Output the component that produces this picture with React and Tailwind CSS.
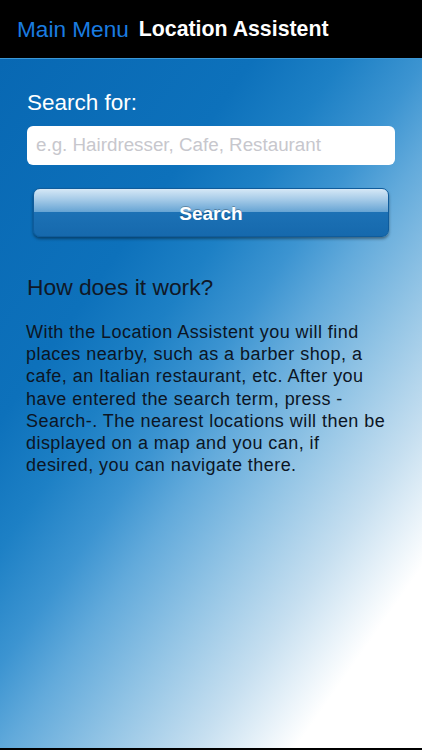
import React from 'react';

const font = { fontFamily: '"Liberation Sans", Arial, sans-serif' };

const lines = [
    'With the Location Assistent you will find',
    'places nearby, such as a barber shop, a',
    'cafe, an Italian restaurant, etc. After you',
    'have entered the search term, press -',
    'Search-. The nearest locations will then be',
    'displayed on a map and you can, if',
    'desired, you can navigate there.',
];

const App = () => {
    return (
        <div className="w-full h-[750px] flex flex-col overflow-hidden" style={font}>
            {/* Navigation bar */}
            <div className="h-[58px] bg-black flex items-center pl-[17px] gap-[10px] pt-[2px] shrink-0">
                <span className="text-[22.6px] text-[#1a7ce0] leading-none">Main Menu</span>
                <span className="text-[21.3px] font-bold text-white leading-none">Location Assistent</span>
            </div>
            <div className="h-px bg-[#3b97d6] shrink-0"></div>

            {/* Content */}
            <div className="flex-1 px-[27px] pt-[31px] bg-[linear-gradient(125deg,#0868b3_0%,#0d71bb_28%,#1d80c5_38%,#3c94d1_47%,#62aadb_54%,#92c4e5_64%,#c6dff0_75%,#ffffff_86%)]">
                <div className="text-[22.5px] leading-[26px] text-white">Search for:</div>

                <div className="mt-[10px] h-[39px] bg-white rounded-[6px] flex items-center px-[9px]">
                    <span className="text-[18.8px] text-[#c7c7cd] whitespace-nowrap">e.g. Hairdresser, Cafe, Restaurant</span>
                </div>

                <button className="mt-[23px] mx-[6px] w-[356px] h-[49px] rounded-[7px] border border-[#0f5c9c] bg-[linear-gradient(to_bottom,#d6e8f6_0%,#a6cbe8_22%,#68a5d4_48%,#1c71b5_50%,#1669ad_100%)] shadow-[0_2px_3px_rgba(0,0,0,0.4)] flex items-center justify-center pt-[4px]">
                    <span className="text-[19px] font-bold text-white [text-shadow:0_-1px_0_rgba(0,0,0,0.25)]">Search</span>
                </button>

                <div className="mt-[37px] text-[22.8px] leading-[26px] text-[#101827]">How does it work?</div>

                <div className="mt-[21px] -ml-px text-[18px] tracking-[0.45px] leading-[22.2px] text-[#0c1524]">
                    {lines.map((l, i) => (
                        <div key={i} className="whitespace-nowrap">{l}</div>
                    ))}
                </div>
            </div>

            <div className="h-[2px] bg-black shrink-0"></div>
        </div>
    );
};

export default App;
